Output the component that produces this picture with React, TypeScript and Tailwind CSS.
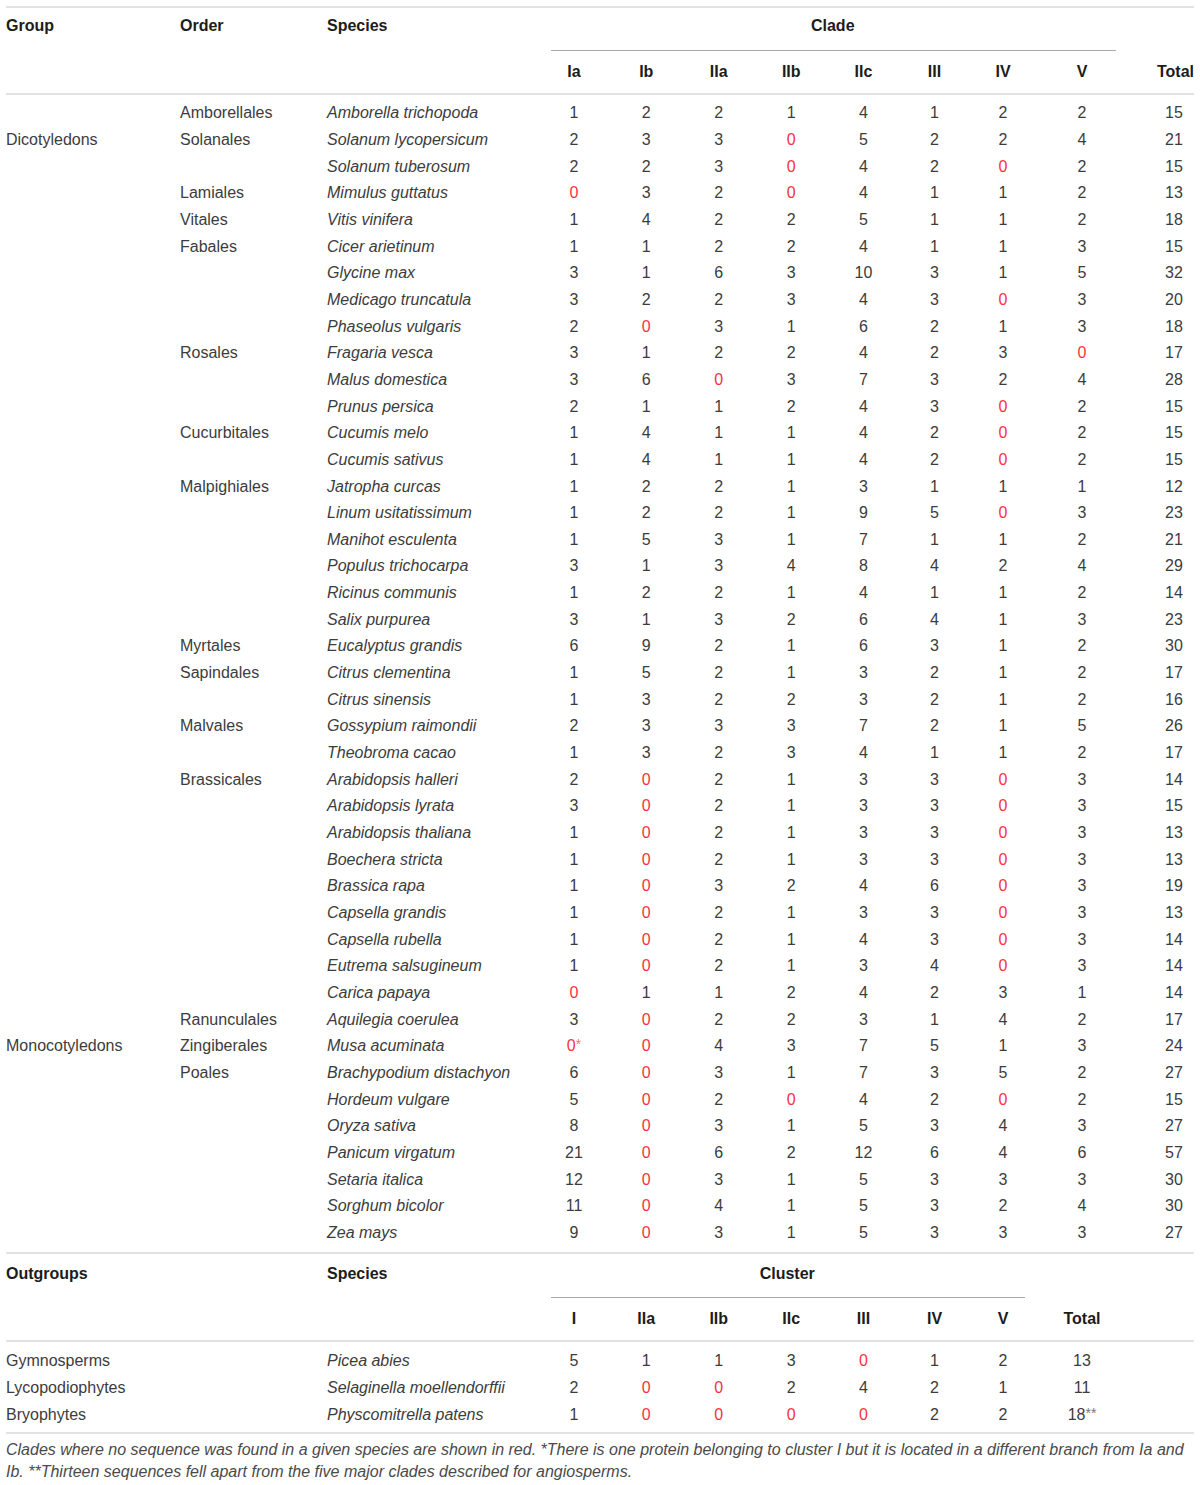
const COLS =
  'grid grid-cols-[174px_147px_211px_72px_72.5px_72.5px_72.5px_72px_70px_67px_91px_1fr]';

type Row = [string, string, string, ...string[]];

const rows: Row[] = [
  ['', 'Amborellales', 'Amborella trichopoda', '1', '2', '2', '1', '4', '1', '2', '2', '15'],
  ['Dicotyledons', 'Solanales', 'Solanum lycopersicum', '2', '3', '3', '0', '5', '2', '2', '4', '21'],
  ['', '', 'Solanum tuberosum', '2', '2', '3', '0', '4', '2', '0', '2', '15'],
  ['', 'Lamiales', 'Mimulus guttatus', '0', '3', '2', '0', '4', '1', '1', '2', '13'],
  ['', 'Vitales', 'Vitis vinifera', '1', '4', '2', '2', '5', '1', '1', '2', '18'],
  ['', 'Fabales', 'Cicer arietinum', '1', '1', '2', '2', '4', '1', '1', '3', '15'],
  ['', '', 'Glycine max', '3', '1', '6', '3', '10', '3', '1', '5', '32'],
  ['', '', 'Medicago truncatula', '3', '2', '2', '3', '4', '3', '0', '3', '20'],
  ['', '', 'Phaseolus vulgaris', '2', '0', '3', '1', '6', '2', '1', '3', '18'],
  ['', 'Rosales', 'Fragaria vesca', '3', '1', '2', '2', '4', '2', '3', '0', '17'],
  ['', '', 'Malus domestica', '3', '6', '0', '3', '7', '3', '2', '4', '28'],
  ['', '', 'Prunus persica', '2', '1', '1', '2', '4', '3', '0', '2', '15'],
  ['', 'Cucurbitales', 'Cucumis melo', '1', '4', '1', '1', '4', '2', '0', '2', '15'],
  ['', '', 'Cucumis sativus', '1', '4', '1', '1', '4', '2', '0', '2', '15'],
  ['', 'Malpighiales', 'Jatropha curcas', '1', '2', '2', '1', '3', '1', '1', '1', '12'],
  ['', '', 'Linum usitatissimum', '1', '2', '2', '1', '9', '5', '0', '3', '23'],
  ['', '', 'Manihot esculenta', '1', '5', '3', '1', '7', '1', '1', '2', '21'],
  ['', '', 'Populus trichocarpa', '3', '1', '3', '4', '8', '4', '2', '4', '29'],
  ['', '', 'Ricinus communis', '1', '2', '2', '1', '4', '1', '1', '2', '14'],
  ['', '', 'Salix purpurea', '3', '1', '3', '2', '6', '4', '1', '3', '23'],
  ['', 'Myrtales', 'Eucalyptus grandis', '6', '9', '2', '1', '6', '3', '1', '2', '30'],
  ['', 'Sapindales', 'Citrus clementina', '1', '5', '2', '1', '3', '2', '1', '2', '17'],
  ['', '', 'Citrus sinensis', '1', '3', '2', '2', '3', '2', '1', '2', '16'],
  ['', 'Malvales', 'Gossypium raimondii', '2', '3', '3', '3', '7', '2', '1', '5', '26'],
  ['', '', 'Theobroma cacao', '1', '3', '2', '3', '4', '1', '1', '2', '17'],
  ['', 'Brassicales', 'Arabidopsis halleri', '2', '0', '2', '1', '3', '3', '0', '3', '14'],
  ['', '', 'Arabidopsis lyrata', '3', '0', '2', '1', '3', '3', '0', '3', '15'],
  ['', '', 'Arabidopsis thaliana', '1', '0', '2', '1', '3', '3', '0', '3', '13'],
  ['', '', 'Boechera stricta', '1', '0', '2', '1', '3', '3', '0', '3', '13'],
  ['', '', 'Brassica rapa', '1', '0', '3', '2', '4', '6', '0', '3', '19'],
  ['', '', 'Capsella grandis', '1', '0', '2', '1', '3', '3', '0', '3', '13'],
  ['', '', 'Capsella rubella', '1', '0', '2', '1', '4', '3', '0', '3', '14'],
  ['', '', 'Eutrema salsugineum', '1', '0', '2', '1', '3', '4', '0', '3', '14'],
  ['', '', 'Carica papaya', '0', '1', '1', '2', '4', '2', '3', '1', '14'],
  ['', 'Ranunculales', 'Aquilegia coerulea', '3', '0', '2', '2', '3', '1', '4', '2', '17'],
  ['Monocotyledons', 'Zingiberales', 'Musa acuminata', '0*', '0', '4', '3', '7', '5', '1', '3', '24'],
  ['', 'Poales', 'Brachypodium distachyon', '6', '0', '3', '1', '7', '3', '5', '2', '27'],
  ['', '', 'Hordeum vulgare', '5', '0', '2', '0', '4', '2', '0', '2', '15'],
  ['', '', 'Oryza sativa', '8', '0', '3', '1', '5', '3', '4', '3', '27'],
  ['', '', 'Panicum virgatum', '21', '0', '6', '2', '12', '6', '4', '6', '57'],
  ['', '', 'Setaria italica', '12', '0', '3', '1', '5', '3', '3', '3', '30'],
  ['', '', 'Sorghum bicolor', '11', '0', '4', '1', '5', '3', '2', '4', '30'],
  ['', '', 'Zea mays', '9', '0', '3', '1', '5', '3', '3', '3', '27'],
];

const outgroups: [string, string, string[]][] = [
  ['Gymnosperms', 'Picea abies', ['5', '1', '1', '3', '0', '1', '2', '13']],
  ['Lycopodiophytes', 'Selaginella moellendorffii', ['2', '0', '0', '2', '4', '2', '1', '11']],
  ['Bryophytes', 'Physcomitrella patens', ['1', '0', '0', '0', '0', '2', '2', '18**']],
];

const clades = ['Ia', 'Ib', 'IIa', 'IIb', 'IIc', 'III', 'IV', 'V'];
const clusters = ['I', 'IIa', 'IIb', 'IIc', 'III', 'IV', 'V'];

function Num({ v }: { v: string }) {
  const red = v.startsWith('0');
  const star = v.indexOf('*');
  const base = star >= 0 ? v.slice(0, star) : v;
  const stars = star >= 0 ? v.slice(star) : '';
  return (
    <div className={`text-center ${red ? 'text-[#f5333f]' : ''}`}>
      {base}
      {stars && <span className="relative -top-[2px] text-[14px] opacity-70">{stars}</span>}
    </div>
  );
}

export default function App() {
  return (
    <div
      className="bg-white px-[6px] pt-[6px] text-[16px] leading-[20px] text-[#3c3c3c]"
      style={{ fontFamily: '"Liberation Sans", Arial, sans-serif' }}
    >
      {/* main table head */}
      <div className="border-t-2 border-[#e2e2e2]">
        <div className={`${COLS} h-[43px] font-bold text-[#1c1c1c]`}>
          <div className="pt-[8px]">Group</div>
          <div className="pt-[8px]">Order</div>
          <div className="pt-[8px]">Species</div>
          <div className="col-span-8 flex flex-col justify-between">
            <div className="pt-[8px] text-center">Clade</div>
            <div className="ml-[13px] mr-[11.5px] h-px bg-[#a8a8a8]" />
          </div>
          <div />
        </div>
        <div className={`${COLS} h-[42px] items-center font-bold text-[#1c1c1c]`}>
          <div />
          <div />
          <div />
          {clades.map((c) => (
            <div key={c} className="text-center">
              {c}
            </div>
          ))}
          <div className="flex justify-end">
            <span>Total</span>
          </div>
        </div>
      </div>

      {/* main table body */}
      <div className="border-t-2 border-[#e2e2e2] pt-[5px] pb-[6px]">
        {rows.map((r, i) => (
          <div key={i} className={`${COLS} h-[26.67px] items-center`}>
            <div>{r[0]}</div>
            <div>{r[1]}</div>
            <div className="italic">{r[2]}</div>
            {r.slice(3, 11).map((v, j) => (
              <Num key={j} v={v} />
            ))}
            <div className="flex justify-end">
              <div className="w-[40px] text-center">{r[11]}</div>
            </div>
          </div>
        ))}
      </div>

      {/* outgroups head */}
      <div className="border-t-2 border-[#e2e2e2]">
        <div className={`${COLS} h-[44px] font-bold text-[#1c1c1c]`}>
          <div className="col-span-2 pt-[10px]">Outgroups</div>
          <div className="pt-[10px]">Species</div>
          <div className="col-span-7 flex flex-col justify-between">
            <div className="pt-[10px] text-center">Cluster</div>
            <div className="ml-[13px] mr-[11.5px] h-px bg-[#a8a8a8]" />
          </div>
          <div />
          <div />
        </div>
        <div className={`${COLS} h-[42px] items-center font-bold text-[#1c1c1c]`}>
          <div />
          <div />
          <div />
          {clusters.map((c) => (
            <div key={c} className="text-center">
              {c}
            </div>
          ))}
          <div className="text-center">Total</div>
          <div />
        </div>
      </div>

      {/* outgroups body */}
      <div className="border-y-2 border-[#e2e2e2] pt-[5px] pb-[4px]">
        {outgroups.map(([g, s, vals]) => (
          <div key={s} className={`${COLS} h-[27px] items-center`}>
            <div className="col-span-2">{g}</div>
            <div className="italic">{s}</div>
            {vals.map((v, j) => (
              <Num key={j} v={v} />
            ))}
            <div />
          </div>
        ))}
      </div>

      <p className="pt-[5px] pb-[4px] text-[16px] leading-[22px] italic text-[#4a4a4a]">
        Clades where no sequence was found in a given species are shown in red. *There is one
        protein belonging to cluster I but it is located in a different branch from Ia and Ib.
        **Thirteen sequences fell apart from the five major clades described for angiosperms.
      </p>
    </div>
  );
}
